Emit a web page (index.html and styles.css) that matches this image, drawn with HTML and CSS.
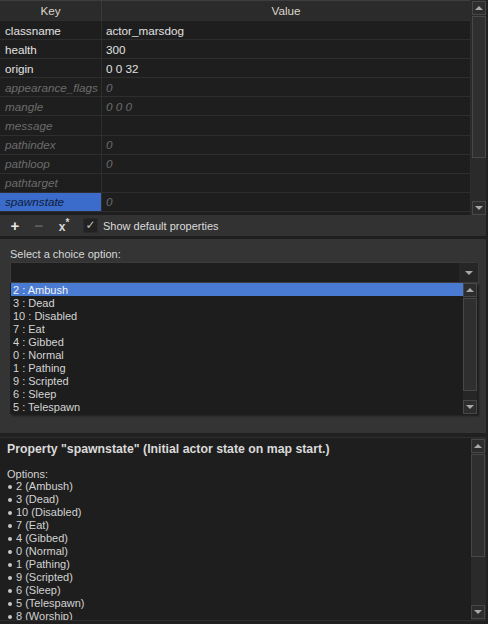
FILE: index.html
```html
<!DOCTYPE html>
<html>
<head>
<meta charset="utf-8">
<link rel="stylesheet" href="styles.css">
</head>
<body>
<div class="app">
  <div class="props">
    <div class="grid">
      <div class="hdr"><div class="hk">Key</div><div class="hv">Value</div></div>
      <div class="row"><div class="k">classname</div><div class="v">actor_marsdog</div></div>
      <div class="row"><div class="k">health</div><div class="v">300</div></div>
      <div class="row"><div class="k">origin</div><div class="v">0 0 32</div></div>
      <div class="row def"><div class="k">appearance_flags</div><div class="v">0</div></div>
      <div class="row def"><div class="k">mangle</div><div class="v">0 0 0</div></div>
      <div class="row def"><div class="k">message</div><div class="v"></div></div>
      <div class="row def"><div class="k">pathindex</div><div class="v">0</div></div>
      <div class="row def"><div class="k">pathloop</div><div class="v">0</div></div>
      <div class="row def"><div class="k">pathtarget</div><div class="v"></div></div>
      <div class="row def sel"><div class="k">spawnstate</div><div class="v">0</div></div>
    </div>
    <div class="vscroll">
      <div class="sbtn"><span class="tri up"></span></div>
      <div class="thumb thumb-top"></div>
      <div class="track"></div>
      <div class="sbtn"><span class="tri down"></span></div>
    </div>
  </div>

  <div class="toolbar">
    <span class="tb plus">+</span>
    <span class="tb minus">−</span>
    <span class="tb clear">x<sup>*</sup></span>
    <span class="check">✓</span>
    <span class="tblabel">Show default properties</span>
  </div>

  <div class="choice">
    <div class="label">Select a choice option:</div>
    <div class="combo">
      <div class="combo-field"></div>
      <div class="combo-btn"><span class="tri down"></span></div>
    </div>
    <div class="popup">
      <div class="items">
        <div class="item on">2 : Ambush</div>
        <div class="item">3 : Dead</div>
        <div class="item">10 : Disabled</div>
        <div class="item">7 : Eat</div>
        <div class="item">4 : Gibbed</div>
        <div class="item">0 : Normal</div>
        <div class="item">1 : Pathing</div>
        <div class="item">9 : Scripted</div>
        <div class="item">6 : Sleep</div>
        <div class="item">5 : Telespawn</div>
      </div>
      <div class="vscroll small">
        <div class="sbtn"><span class="tri up"></span></div>
        <div class="thumb thumb-list"></div>
        <div class="track"></div>
        <div class="sbtn"><span class="tri down"></span></div>
      </div>
    </div>
  </div>

  <div class="desc">
    <div class="desc-text">
      <div class="title">Property "spawnstate" (Initial actor state on map start.)</div>
      <div class="blank"></div>
      <div class="line">Options:</div>
      <ul class="opts">
        <li>2 (Ambush)</li>
        <li>3 (Dead)</li>
        <li>10 (Disabled)</li>
        <li>7 (Eat)</li>
        <li>4 (Gibbed)</li>
        <li>0 (Normal)</li>
        <li>1 (Pathing)</li>
        <li>9 (Scripted)</li>
        <li>6 (Sleep)</li>
        <li>5 (Telespawn)</li>
        <li>8 (Worship)</li>
      </ul>
    </div>
    <div class="vscroll dsc">
      <div class="sbtn"><span class="tri up"></span></div>
      <div class="thumb thumb-desc"></div>
      <div class="track"></div>
      <div class="sbtn"><span class="tri down"></span></div>
    </div>
  </div>
</div>
</body>
</html>
```

FILE: styles.css
```css
html, body {
  margin: 0;
  padding: 0;
  background: #202020;
}
body {
  width: 488px;
  height: 624px;
  overflow: hidden;
  font-family: "Liberation Sans", Arial, sans-serif;
  font-size: 11px;
  color: #d6d6d6;
}
.app {
  width: 486px;
  display: flex;
  flex-direction: column;
}

/* ---------- property grid ---------- */
.props {
  height: 215px;
  display: flex;
  background: #1e1e1e;
}
.grid {
  flex: 1;
  border-right: 1px solid #2c2c2c;
  overflow: hidden;
  font-size: 11.7px;
}
.hdr {
  height: 19px;
  display: flex;
  background: #2b2b2b;
  border-top: 1px solid #3e3e3e;
  color: #dcd6c8;
}
.hk, .hv {
  display: flex;
  align-items: center;
  justify-content: center;
}
.hk {
  width: 101px;
  border-right: 1px solid #3a3a3a;
}
.hv {
  flex: 1;
}
.row {
  height: 18.1px;
  display: flex;
  border-top: 1px solid #2e2e2e;
}
.row .k {
  width: 96px;
  padding-left: 5px;
  border-right: 1px solid #2e2e2e;
  display: flex;
  align-items: center;
  color: #e2e2e2;
  white-space: nowrap;
  overflow: hidden;
}
.row .v {
  flex: 1;
  padding-left: 4px;
  display: flex;
  align-items: center;
  color: #e0e0e0;
}
.row.def .k, .row.def .v {
  font-style: italic;
  color: #6c6c6c;
}
.row.sel .k {
  background: #3b6ccb;
  color: #0f1d3c;
}
.row:last-child {
  border-bottom: 1px solid #2e2e2e;
}

/* ---------- scrollbars ---------- */
.vscroll {
  width: 14px;
  padding-left: 1px;
  display: flex;
  flex-direction: column;
  background: #2a2a2a;
}
.sbtn {
  height: 12px;
  border: 1px solid #474747;
  background: #2d2d2d;
  display: flex;
  align-items: center;
  justify-content: center;
  box-sizing: content-box;
  width: 12px;
}
.props .vscroll .sbtn:first-child {
  margin-top: 1px;
}
.thumb {
  width: 12px;
  border: 1px solid #474747;
  background: #2f2f2f;
  margin-top: 1px;
}
.thumb-top { height: 140px; }
.thumb-list { height: 91px; }
.thumb-desc { height: 101px; }
.track {
  flex: 1;
}
.tri {
  width: 0;
  height: 0;
  border-left: 4px solid transparent;
  border-right: 4px solid transparent;
}
.tri.up {
  border-bottom: 4px solid #a8a8a8;
}
.tri.down {
  border-top: 4px solid #a8a8a8;
}

/* ---------- toolbar ---------- */
.toolbar {
  height: 21px;
  background: #323232;
  display: flex;
  align-items: center;
  border-bottom: 3px solid #1e1e1e;
}
.tb {
  font-weight: bold;
  color: #e8e8e8;
  text-align: center;
}
.tb.plus {
  font-size: 15px;
  width: 14px;
  margin-left: 8px;
}
.tb.minus {
  font-size: 15px;
  color: #5e5e5e;
  width: 14px;
  margin-left: 10px;
}
.tb.clear {
  font-size: 12px;
  color: #d8d8d8;
  margin-left: 11px;
  width: 14px;
  position: relative;
  top: 1px;
}
.tb.clear sup {
  font-size: 10px;
  vertical-align: 5px;
  line-height: 0;
}
.check {
  width: 13px;
  height: 13px;
  margin-left: 12px;
  background: #222222;
  border: 1px solid #2a2a2a;
  color: #c0c0c0;
  font-size: 12px;
  line-height: 13px;
  text-align: center;
  font-family: "DejaVu Sans", sans-serif;
}
.tblabel {
  margin-left: 5px;
  color: #dcdcdc;
}

/* ---------- choice panel ---------- */
.choice {
  height: 194px;
  background: #343434;
  padding: 0 10px;
  box-sizing: border-box;
  display: flex;
  flex-direction: column;
}
.label {
  margin-top: 8px;
  height: 14px;
  line-height: 14px;
  color: #d8d8d8;
}
.combo {
  margin-top: 1px;
  width: 467px;
  height: 19px;
  display: flex;
  border: 1px solid #3b3b3b;
  border-top-right-radius: 3px;
  background: #1e1e1e;
}
.combo-field {
  flex: 1;
}
.combo-btn {
  width: 19px;
  background: #262626;
  display: flex;
  align-items: center;
  justify-content: center;
}
.popup {
  width: 467px;
  height: 131px;
  display: flex;
  background: #1d1d1d;
  box-shadow: 2px 2px 2px rgba(0, 0, 0, 0.45);
}
.items {
  flex: 1;
  padding-left: 1px;
}
.item {
  height: 13px;
  line-height: 14px;
  padding-left: 2px;
  color: #d4d4d4;
}
.item.on {
  background: #4a7bd3;
  color: #f2f2f2;
}
.vscroll.small {
  background: #262626;
  padding-left: 0;
}

/* ---------- description ---------- */
.desc {
  margin-top: 4px;
  height: 182px;
  border-top: 1px solid #2e2e2e;
  border-bottom: 1px solid #2e2e2e;
  background: #1e1e1e;
  display: flex;
}
.desc-text {
  flex: 1;
  padding-left: 7px;
  overflow: hidden;
}
.title {
  margin-top: 3px;
  font-weight: bold;
  font-size: 12.3px;
  height: 15px;
  line-height: 17px;
  color: #dadada;
}
.blank {
  height: 11px;
}
.line {
  height: 13px;
  line-height: 15px;
  color: #d2d2d2;
}
.opts {
  list-style: none;
  margin: 0;
  padding: 0;
}
.opts li {
  height: 13px;
  line-height: 15px;
  color: #d2d2d2;
  display: flex;
  align-items: center;
}
.opts li::before {
  content: "";
  width: 4px;
  height: 4px;
  border-radius: 50%;
  background: #c8c8c8;
  margin: 0 4px 0 1px;
}
.vscroll.dsc {
  padding-left: 0;
  width: 15px;
}
.vscroll.dsc .sbtn {
  margin-top: 1px;
}
.vscroll.dsc .sbtn:last-child {
  margin-bottom: 1px;
}
```
